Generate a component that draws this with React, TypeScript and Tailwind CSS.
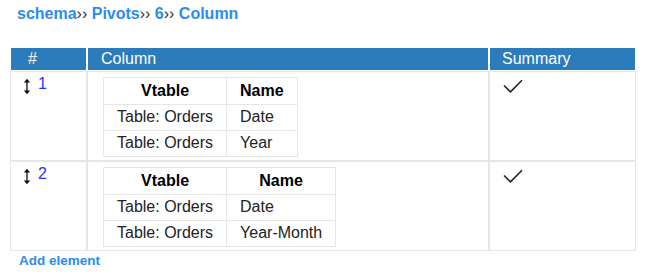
import React from 'react';

type Item = {
  id: number;
  rows: { vtable: string; name: string }[];
};

const items: Item[] = [
  {
    id: 1,
    rows: [
      { vtable: 'Table: Orders', name: 'Date' },
      { vtable: 'Table: Orders', name: 'Year' },
    ],
  },
  {
    id: 2,
    rows: [
      { vtable: 'Table: Orders', name: 'Date' },
      { vtable: 'Table: Orders', name: 'Year-Month' },
    ],
  },
];

const SortArrow = () => (
  <svg width="8" height="17" viewBox="0 0 8 17" className="mt-[3px] shrink-0">
    <path d="M4 3v11" stroke="#111" strokeWidth="1.3" />
    <path d="M0.8 4.5L4 0.8L7.2 4.5Z" fill="#111" />
    <path d="M0.8 12.5L4 16.2L7.2 12.5Z" fill="#111" />
  </svg>
);

const Check = () => (
  <svg width="20" height="14" viewBox="0 0 20 14" className="mt-[7px]">
    <path d="M1 6.5L7.5 12.8L19 1.2" fill="none" stroke="#222" strokeWidth="1.6" />
  </svg>
);

export default function App() {
  return (
    <div className="min-h-screen bg-white px-[10px] font-['Liberation_Sans',Arial,sans-serif]">
      {/* breadcrumb */}
      <div className="pt-[5px] pl-[7px] text-[16px] leading-[18px]">
        <span className="font-bold text-[#2b8cf0]">schema</span>
        <span className="text-[#333]">›› </span>
        <span className="font-bold text-[#2b8cf0]">Pivots</span>
        <span className="text-[#333]">›› </span>
        <span className="font-bold text-[#2b8cf0]">6</span>
        <span className="text-[#333]">›› </span>
        <span className="font-bold text-[#2b8cf0]">Column</span>
      </div>

      {/* elements */}
      <table className="mt-[24px] w-[626px] table-fixed border-separate border-spacing-0 text-[16px]">
        <colgroup>
          <col className="w-[77px]" />
          <col className="w-[402px]" />
          <col className="w-[147px]" />
        </colgroup>
        <thead>
          <tr>
            <th className="border border-white bg-[#2c7bba] pl-[17px] text-left font-normal leading-[22px] text-white">#</th>
            <th className="border border-white bg-[#2c7bba] pl-[13px] text-left font-normal leading-[22px] text-white">Column</th>
            <th className="border border-white bg-[#2c7bba] pl-[12px] text-left font-normal leading-[22px] text-white">Summary</th>
          </tr>
        </thead>
        <tbody>
          {items.map(item => (
            <tr key={item.id}>
              <td className="border border-[#e6e6e6] pl-[12px] pt-[3px] align-top">
                <div className="flex items-start gap-[7px]">
                  <SortArrow />
                  <span className="leading-[18px] text-[#2f2fff]">{item.id}</span>
                </div>
              </td>
              <td className="border border-[#e6e6e6] pb-[3px] pl-[15px] pt-[5px] align-top">
                <table className="border-collapse text-black">
                  <thead>
                    <tr>
                      <th className="border border-[#e6e6e6] px-[13px] pb-[2px] pt-[1px] text-center font-bold leading-[23px]">Vtable</th>
                      <th className="border border-[#e6e6e6] px-[13px] pb-[2px] pt-[1px] text-center font-bold leading-[23px]">Name</th>
                    </tr>
                  </thead>
                  <tbody>
                    {item.rows.map((r, i) => (
                      <tr key={i}>
                        <td className="whitespace-nowrap border border-[#e6e6e6] px-[13px] pb-[2px] leading-[23px] text-[#222]">{r.vtable}</td>
                        <td className="whitespace-nowrap border border-[#e6e6e6] px-[13px] pb-[2px] leading-[23px] text-[#222]">{r.name}</td>
                      </tr>
                    ))}
                  </tbody>
                </table>
              </td>
              <td className="border border-[#e6e6e6] pl-[13px] align-top">
                <Check />
              </td>
            </tr>
          ))}
        </tbody>
      </table>

      <div className="pl-[9px] text-[13.5px] font-bold text-[#2b8cf0]">
        <a href="#">Add element</a>
      </div>
    </div>
  );
}
